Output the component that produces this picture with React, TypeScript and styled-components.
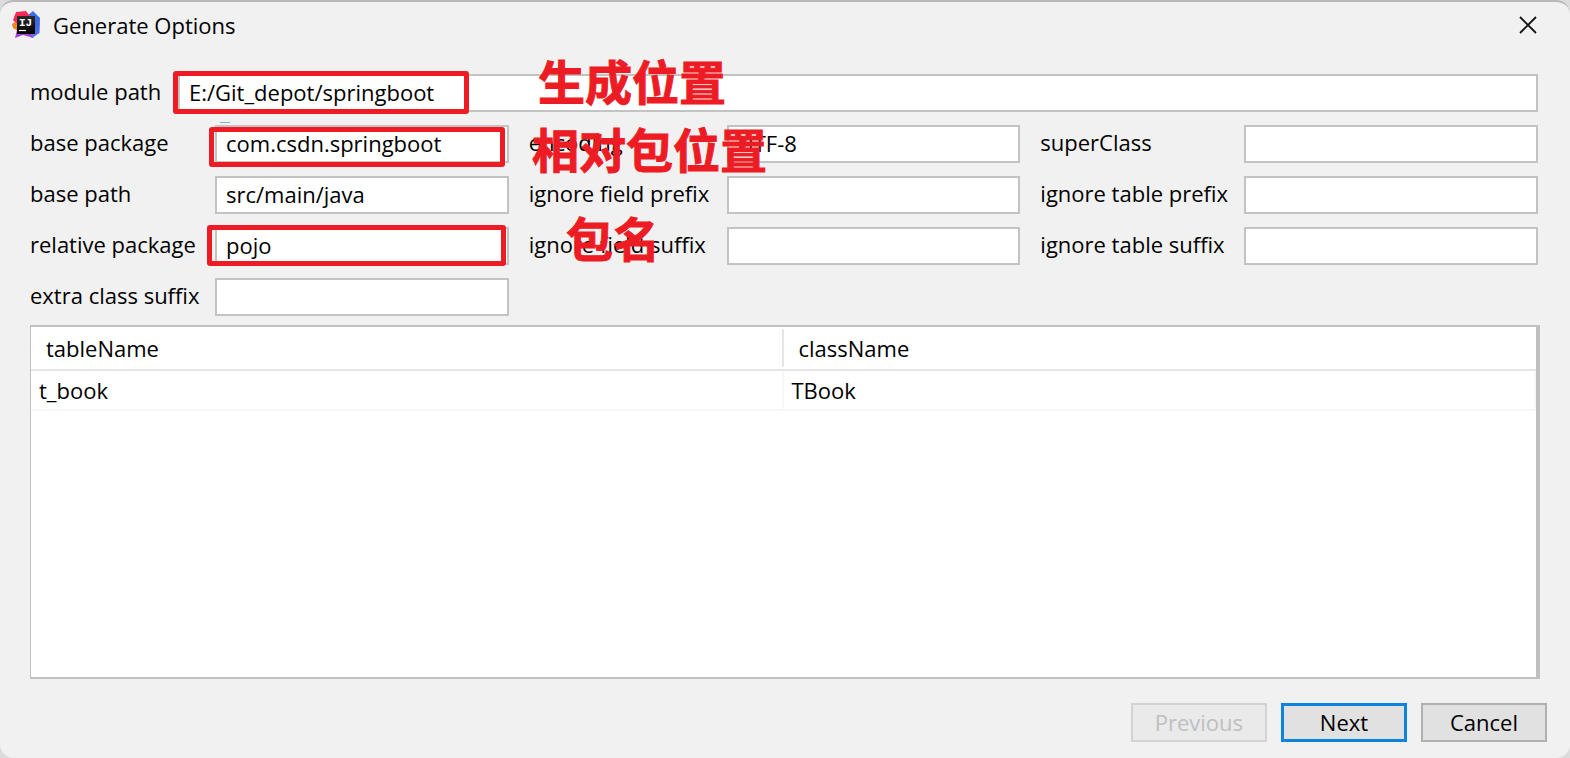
import React, { useId } from "react";
import styled, { createGlobalStyle } from "styled-components";

const GlobalStyle = createGlobalStyle`
  *, *::before, *::after { box-sizing: border-box; }
  html, body, #root { height: 100%; }
  body { margin: 0; background: #dcdcdc; }
  body, input, button, table {
    font-family: "Open Sans", "Noto Sans", "Noto Sans CJK SC", sans-serif;
    font-size: 22px;
    line-height: 30px;
    color: #000;
  }
`;

const Dialog = styled.main`
  min-height: 100vh;
  display: flex;
  flex-direction: column;
  background: #f1f1f1;
  border-top: 2px solid #b8b8b8;
  border-radius: 14px;
`;

const TitleBar = styled.header`
  display: flex;
  align-items: center;
  gap: 13px;
  height: 46px;
  padding: 0 33px 0 12px;
`;

const Title = styled.h1`
  flex: 1;
  margin: 0;
  font-size: 22px;
  font-weight: 400;
`;

const CloseButton = styled.button`
  display: flex;
  padding: 0;
  border: 0;
  background: none;
`;

const Form = styled.form`
  position: relative;
  flex: 1;
  display: flex;
  flex-direction: column;
  padding: 26px 30px 16px;
`;

const Fields = styled.div`
  display: flex;
  flex-direction: column;
  gap: 13px;
  padding-right: 2px;
`;

const PathRow = styled.div`
  display: grid;
  grid-template-columns: 148px 1fr;
  align-items: center;
`;

const FieldGrid = styled.div`
  display: grid;
  grid-template-columns: 185px 1fr 218px 1fr 224px 1fr;
  row-gap: 13px;
  align-items: center;
`;

const Label = styled.label<{ $inset?: boolean }>`
  padding: 0 0 4px ${(p) => (p.$inset ? 20 : 0)}px;
  white-space: nowrap;
`;

const TextInput = styled.input`
  display: block;
  width: 100%;
  min-width: 0;
  height: 38px;
  padding: 0 9px 3px;
  border: 2px solid #c3c3c3;
  border-radius: 0;
  background: #fff;
  outline: none;
`;

const TablePanel = styled.div`
  flex: 1;
  margin: 9px 0 24px;
  border: 2px solid #c0c0c0;
  border-left-width: 1px;
  border-right-width: 4px;
  background: #fff;
`;

const DataTable = styled.table`
  width: 100%;
  table-layout: fixed;
  border-collapse: separate;
  border-spacing: 0;
`;

const HeadCell = styled.th`
  height: 44px;
  padding: 0 15px;
  border-bottom: 2px solid #e5e5e5;
  background: linear-gradient(#e5e5e5, #e5e5e5) right 2px / 2px 38px no-repeat;
  font-weight: 400;
  text-align: left;
  &:last-child { background: none; }
`;

const Cell = styled.td`
  height: 40px;
  padding: 0 8px;
  border-bottom: 2px solid #f7f7f7;
  border-right: 2px solid #f7f7f7;
`;

const Actions = styled.footer`
  display: flex;
  justify-content: flex-end;
  gap: 14px;
  margin-right: -7px;
`;

const ActionButton = styled.button<{ $primary?: boolean }>`
  min-width: 126px;
  height: 39px;
  padding: 0 22px 2px;
  border: ${(p) => (p.$primary ? "3px solid #0a84de" : "2px solid #b0b0b0")};
  background: #e1e1e1;
  &:disabled {
    border-color: #d3d3d3;
    background: #eaeaea;
    color: #bfbfbf;
  }
`;

const Highlight = styled.div<{ $x: number; $y: number; $w: number; $h: number }>`
  position: absolute;
  left: ${(p) => p.$x}px;
  top: ${(p) => p.$y}px;
  width: ${(p) => p.$w}px;
  height: ${(p) => p.$h}px;
  border: 5px solid #ed1c24;
  border-radius: 3px;
  pointer-events: none;
`;

const Note = styled.div<{ $x: number; $y: number }>`
  position: absolute;
  left: ${(p) => p.$x}px;
  top: ${(p) => p.$y}px;
  font-family: "Noto Sans CJK SC", sans-serif;
  font-size: 47px;
  line-height: 56px;
  font-weight: 700;
  color: #ed1c24;
  -webkit-text-stroke: 1px #ed1c24;
  white-space: nowrap;
  pointer-events: none;
`;

const FocusMark = styled.div`
  position: absolute;
  left: 220px;
  top: 74px;
  width: 10px;
  height: 1px;
  background: #7fb2d9;
`;

function Field({ label, value = "", inset }: { label: string; value?: string; inset?: boolean }) {
  const id = useId();
  return (
    <>
      <Label htmlFor={id} $inset={inset}>{label}</Label>
      <TextInput id={id} type="text" defaultValue={value} />
    </>
  );
}

function IdeaLogo() {
  return (
    <svg width="28" height="28" viewBox="0 0 28 28" aria-hidden="true">
      <defs>
        <linearGradient id="blue" x1="0" y1="0" x2="0" y2="1">
          <stop offset="0" stopColor="#3a6ff0" />
          <stop offset="0.5" stopColor="#3d66e6" />
          <stop offset="1" stopColor="#5a78f0" />
        </linearGradient>
        <linearGradient id="black" x1="0" y1="0" x2="0" y2="1">
          <stop offset="0" stopColor="#2b2b2b" />
          <stop offset="1" stopColor="#000" />
        </linearGradient>
      </defs>
      <path d="M15 5 21 0 28 7 27.500 22 20 27 14 22Z" fill="url(#blue)" />
      <path d="M4 1 14 0 18 5 16 10 6 14 1 9Z" fill="#fe2857" />
      <path d="M0 13 3 11 7 13 6 20 1 17Z" fill="#fc801d" />
      <path d="M5 19 15 20 22 27 11 24 3 27Z" fill="#a93fd6" />
      <path d="M5 5H23V23H5Z" fill="url(#black)" />
      <text x="7" y="15" fill="#fff" fontFamily="Liberation Mono" fontSize="11" fontWeight="700">IJ</text>
      <path d="M7 19.500H14" stroke="#fff" strokeWidth="1.200" />
    </svg>
  );
}

export default function App() {
  return (
    <>
      <GlobalStyle />
      <Dialog>
        <TitleBar>
          <IdeaLogo />
          <Title>Generate Options</Title>
          <CloseButton type="button" aria-label="Close">
            <svg width="18" height="18" viewBox="0 0 18 18">
              <path d="M1 1 17 17M17 1 1 17" stroke="#111" strokeWidth="1.800" />
            </svg>
          </CloseButton>
        </TitleBar>
        <Form onSubmit={(e) => e.preventDefault()}>
          <Fields>
            <PathRow>
              <Field label="module path" value="E:/Git_depot/springboot" />
            </PathRow>
            <FieldGrid>
              <Field label="base package" value="com.csdn.springboot" />
              <Field label="encoding" value="UTF-8" inset />
              <Field label="superClass" inset />
              <Field label="base path" value="src/main/java" />
              <Field label="ignore field prefix" inset />
              <Field label="ignore table prefix" inset />
              <Field label="relative package" value="pojo" />
              <Field label="ignore field suffix" inset />
              <Field label="ignore table suffix" inset />
              <Field label="extra class suffix" />
            </FieldGrid>
          </Fields>
          <TablePanel>
            <DataTable>
              <thead>
                <tr>
                  <HeadCell>tableName</HeadCell>
                  <HeadCell>className</HeadCell>
                </tr>
              </thead>
              <tbody>
                <tr>
                  <Cell>t_book</Cell>
                  <Cell>TBook</Cell>
                </tr>
              </tbody>
            </DataTable>
          </TablePanel>
          <Actions>
            <ActionButton type="button" disabled>Previous</ActionButton>
            <ActionButton type="submit" $primary>Next</ActionButton>
            <ActionButton type="button">Cancel</ActionButton>
          </Actions>
          <FocusMark />
          <Highlight $x={173} $y={23} $w={296} $h={43} />
          <Highlight $x={209} $y={79} $w={296} $h={40} />
          <Highlight $x={207} $y={177} $w={299} $h={41} />
          <Note $x={538} $y={4}>生成位置</Note>
          <Note $x={532} $y={72}>相对包位置</Note>
          <Note $x={566} $y={161}>包名</Note>
        </Form>
      </Dialog>
    </>
  );
}
